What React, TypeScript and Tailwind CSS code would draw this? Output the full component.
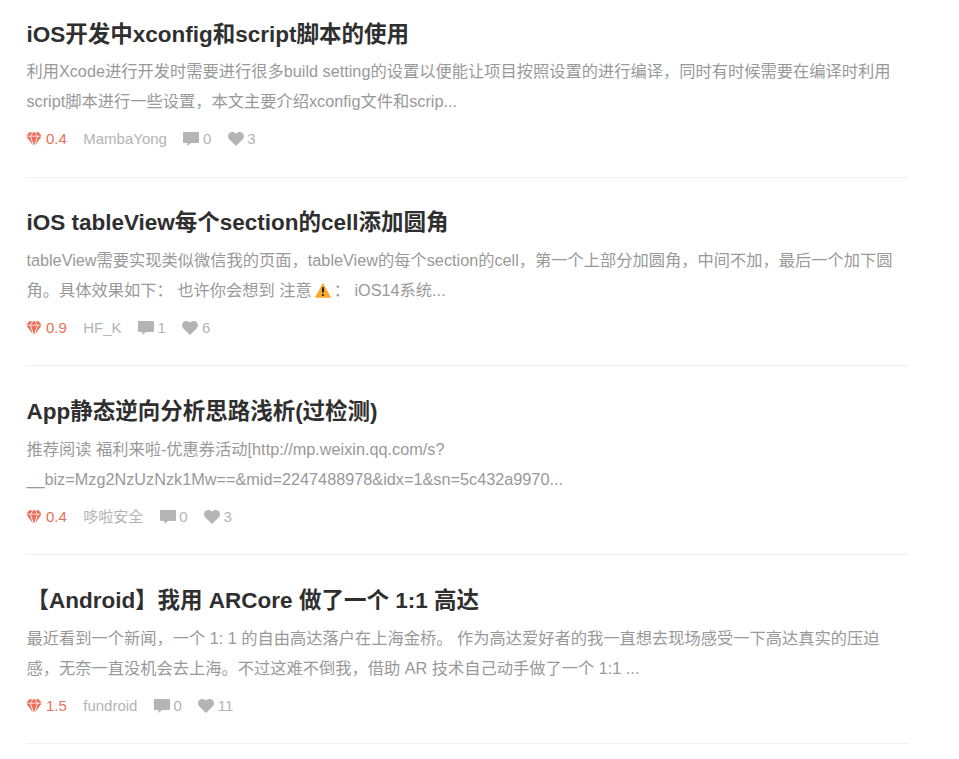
import React from "react";

type Article = {
  title: string;
  lines: React.ReactNode[];
  score: string;
  author: string;
  comments: number;
  likes: number;
};

const Warning = () => (
  <svg className="ml-[3px] mr-[3px] inline-block h-[15px] w-4 align-[-2px]" viewBox="0 0 16 15">
    <path d="M8 .8 15.400 14.200H.6Z" fill="#fba92c" stroke="#fba92c" strokeLinejoin="round" />
    <path d="M8 4.200v5.300" stroke="#222" strokeWidth="2" />
    <circle cx="8" cy="12" r="1.1" fill="#222" />
  </svg>
);

const Diamond = () => (
  <svg className="mr-[3.6px] h-[14px] w-4" viewBox="0 0 16 14" fill="#ea6f5a">
    <path d="M3.300.2h3L4.600 3.800H.4zM7 .2h2l1.600 3.600H5.400zM9.700.2h3l2.900 3.600h-4.200zM.4 4.500h3.700l2.700 8.800zM4.900 4.500h6.200L8 13.800zM11.900 4.500h3.700L9.200 13.300z" />
  </svg>
);

const Comment = () => (
  <svg className="mr-[3.6px] h-[14px] w-4" viewBox="0 0 16 14" fill="#b4b4b4">
    <path d="M1 0h14q1 0 1 1v9q0 1-1 1H8l-3.500 3v-3H1q-1 0-1-1V1q0-1 1-1z" />
  </svg>
);

const Heart = () => (
  <svg className="mr-[3.6px] h-[14px] w-4" viewBox="0 0 16 14" fill="#b4b4b4">
    <path d="M8 14 1.400 7.600C-.5 5.500-.3 2.600 1.400 1.100 3.400-.6 6.500-.2 8 1.800 9.500-.2 12.600-.6 14.600 1.100c1.700 1.500 1.900 4.400 0 6.500z" />
  </svg>
);

const articles: Article[] = [
  {
    title: "iOS开发中xconfig和script脚本的使用",
    lines: [
      "利用Xcode进行开发时需要进行很多build setting的设置以便能让项目按照设置的进行编译，同时有时候需要在编译时利用",
      "script脚本进行一些设置，本文主要介绍xconfig文件和scrip...",
    ],
    score: "0.4", author: "MambaYong", comments: 0, likes: 3,
  },
  {
    title: "iOS tableView每个section的cell添加圆角",
    lines: [
      "tableView需要实现类似微信我的页面，tableView的每个section的cell，第一个上部分加圆角，中间不加，最后一个加下圆",
      <>角。具体效果如下： 也许你会想到 注意<Warning />： iOS14系统...</>,
    ],
    score: "0.9", author: "HF_K", comments: 1, likes: 6,
  },
  {
    title: "App静态逆向分析思路浅析(过检测)",
    lines: [
      "推荐阅读 福利来啦-优惠券活动[http://mp.weixin.qq.com/s?",
      "__biz=Mzg2NzUzNzk1Mw==&mid=2247488978&idx=1&sn=5c432a9970...",
    ],
    score: "0.4", author: "哆啦安全", comments: 0, likes: 3,
  },
  {
    title: "【Android】我用 ARCore 做了一个 1:1 高达",
    lines: [
      "最近看到一个新闻，一个 1: 1 的自由高达落户在上海金桥。 作为高达爱好者的我一直想去现场感受一下高达真实的压迫",
      "感，无奈一直没机会去上海。不过这难不倒我，借助 AR 技术自己动手做了一个 1:1 ...",
    ],
    score: "1.5", author: "fundroid", comments: 0, likes: 11,
  },
];

export default function App() {
  return (
    <main className="h-[759px] overflow-hidden bg-white pl-[26.4px] pt-[18.6px] font-['Liberation_Sans','Noto_Sans_CJK_SC',sans-serif]">
      {articles.map((a) => (
        <article key={a.title} className="mb-[29.65px] h-[159.1px] w-[882px] whitespace-nowrap border-b border-[#f0f0f0]">
          <h2 className="h-[37.8px] text-[22.5px] font-bold leading-8 text-[#2f2f2f]">{a.title}</h2>
          <p className="text-[16.25px] leading-[30px] text-[#999]">
            {a.lines.map((line, i) => <span key={i} className="block h-[30px]">{line}</span>)}
          </p>
          <div className="mt-[13px] flex h-5 items-center text-[15px] leading-5 text-[#b4b4b4]">
            <span className="mr-[16.4px] flex items-center text-[#ea6f5a]"><Diamond />{a.score}</span>
            <span className="mr-[16.4px]">{a.author}</span>
            <span className="mr-[16.4px] flex items-center"><Comment />{a.comments}</span>
            <span className="flex items-center"><Heart />{a.likes}</span>
          </div>
        </article>
      ))}
    </main>
  );
}
